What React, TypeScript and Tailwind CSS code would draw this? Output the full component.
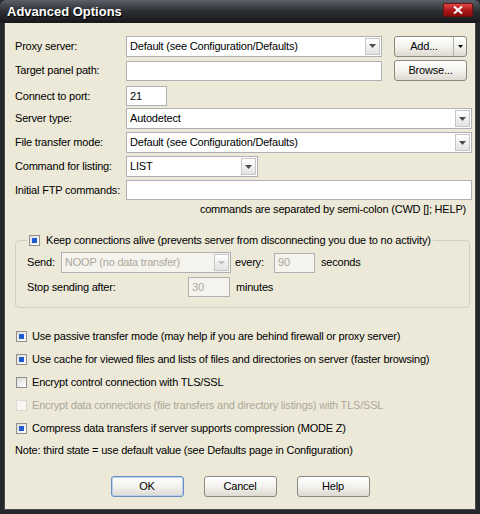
import React from "react"

const font = "font-['Liberation_Sans',Arial,sans-serif]"

function Arrow({ disabled }: { disabled?: boolean }) {
  return (
    <svg width="7" height="4" viewBox="0 0 7 4">
      <path d="M0 0h7L3.5 4z" fill={disabled ? "#c0c0c0" : "#4d4d4d"} />
    </svg>
  )
}

function Select({ value, w, disabled }: { value: string; w: string; disabled?: boolean }) {
  return (
    <div className={`${w} h-[21px] border border-[#b0afb3] ${disabled ? "bg-[#f4f3ee]" : "bg-white"} flex items-center`}>
      <span className={`flex-1 pl-[3px] truncate ${disabled ? "text-[#aca899]" : "text-black"}`}>{value}</span>
      <div className="w-[15px] h-[17px] mr-[1px] border border-[#c5c5c5] bg-gradient-to-b from-white to-[#e3e3e3] flex items-center justify-center">
        <Arrow disabled={disabled} />
      </div>
    </div>
  )
}

function Input({ value, w, disabled }: { value?: string; w: string; disabled?: boolean }) {
  return (
    <div className={`${w} h-[20px] border border-[#b0afb3] ${disabled ? "bg-[#f4f3ee] text-[#aca899]" : "bg-white text-black"} flex items-center pl-[3px]`}>
      {value}
    </div>
  )
}

function Btn({ label, w, isDefault }: { label: string; w: string; isDefault?: boolean }) {
  return (
    <div
      className={`${w} h-[21px] rounded-[3px] border ${isDefault ? "border-[#6a8fc2] shadow-[inset_0_0_0_1px_#b9d1ef]" : "border-[#8a8a80]"} bg-gradient-to-b from-white via-[#f3f2ee] to-[#dcdad0] flex items-center justify-center text-black`}
    >
      {label}
    </div>
  )
}

function Check({ state, disabled }: { state: "third" | "off"; disabled?: boolean }) {
  return (
    <div
      className={`w-[11px] h-[11px] border ${disabled ? "border-[#dcdad0] bg-[#f7f6f2]" : "border-[#8f8f8f] bg-gradient-to-br from-[#dcdcd8] to-white"} flex items-center justify-center shrink-0`}
    >
      {state === "third" && <div className="w-[5px] h-[5px] bg-[#2159d0]" />}
    </div>
  )
}

function Row({ label, children, cls }: { label: string; children: React.ReactNode; cls: string }) {
  return (
    <div className={`flex items-center ${cls}`}>
      <span className="w-[111px] shrink-0">{label}</span>
      {children}
    </div>
  )
}

const checks: { label: string; state: "third" | "off"; disabled?: boolean }[] = [
  { label: "Use passive transfer mode (may help if you are behind firewall or proxy server)", state: "third" },
  { label: "Use cache for viewed files and lists of files and directories on server (faster browsing)", state: "third" },
  { label: "Encrypt control connection with TLS/SSL", state: "off" },
  { label: "Encrypt data connections (file transfers and directory listings) with TLS/SSL", state: "off", disabled: true },
  { label: "Compress data transfers if server supports compression (MODE Z)", state: "third" },
]

export default function App() {
  return (
    <div className={`w-[480px] h-[514px] flex flex-col bg-[#26272b] ${font} text-[11px] leading-[13px] tracking-[-0.2px] text-black`}>
      {/* title bar */}
      <div className="h-[23px] shrink-0 flex items-center justify-between pl-[7px] pr-[7px] bg-gradient-to-b from-[#5c6069] via-[#2c2e33] to-[#17181b] rounded-t-[6px]">
        <span className="text-white font-bold text-[13px] leading-[16px] tracking-normal [text-shadow:1px_1px_0_#000]">Advanced Options</span>
        <div className="w-[30px] h-[14px] mt-[-4px] rounded-[2px] border border-[#6e1010] bg-gradient-to-b from-[#e04a4a] via-[#b01818] to-[#8c0c0c] flex items-center justify-center">
          <svg width="10" height="8" viewBox="0 0 10 8">
            <path d="M1 0.5L9 7.5M9 0.5L1 7.5" stroke="white" strokeWidth="2" />
          </svg>
        </div>
      </div>

      {/* body */}
      <div className="flex-1 mx-[4px] mb-[4px] bg-[#ece9d8] border-l border-r border-b border-[#4a4a4a] pl-[10px] flex flex-col">
        <Row label="Proxy server:" cls="mt-[12px] h-[22px]">
          <Select value="Default (see Configuration/Defaults)" w="w-[256px]" />
          <div className="ml-[12px] w-[73px] h-[21px] rounded-[3px] border border-[#8a8a80] bg-gradient-to-b from-white via-[#f3f2ee] to-[#dcdad0] flex">
            <div className="flex-1 flex items-center justify-center border-r border-[#b5b3a8]">Add...</div>
            <div className="w-[12px] flex items-center justify-center">
              <svg width="5" height="3" viewBox="0 0 5 3">
                <path d="M0 0h5L2.5 3z" fill="#000" />
              </svg>
            </div>
          </div>
        </Row>
        <Row label="Target panel path:" cls="mt-[3px] h-[21px]">
          <Input w="w-[256px]" />
          <div className="ml-[12px]">
            <Btn label="Browse..." w="w-[73px]" />
          </div>
        </Row>
        <Row label="Connect to port:" cls="mt-[5px] h-[20px]">
          <Input value="21" w="w-[41px]" />
        </Row>
        <Row label="Server type:" cls="mt-[2px] h-[21px]">
          <Select value="Autodetect" w="w-[346px]" />
        </Row>
        <Row label="File transfer mode:" cls="mt-[3px] h-[21px]">
          <Select value="Default (see Configuration/Defaults)" w="w-[346px]" />
        </Row>
        <Row label="Command for listing:" cls="mt-[3px] h-[21px]">
          <Select value="LIST" w="w-[132px]" />
        </Row>
        <Row label="Initial FTP commands:" cls="mt-[3px] h-[20px]">
          <Input w="w-[346px]" />
        </Row>
        <div className="mt-[3px] w-[451px] text-right">commands are separated by semi-colon (CWD []; HELP)</div>

        {/* keep alive group */}
        <fieldset className="mt-[18px] w-[455px] h-[74px] border border-[#d0d0bf] rounded-[4px] pl-[11px]">
          <legend className="px-[2px] flex items-center gap-[6px]">
            <Check state="third" />
            <span>Keep connections alive (prevents server from disconnecting you due to no activity)</span>
          </legend>
          <div className="flex items-center mt-[5px] h-[21px]">
            <span className="w-[34px]">Send:</span>
            <Select value="NOOP (no data transfer)" w="w-[170px]" disabled />
            <span className="ml-[4px] w-[39px]">every:</span>
            <Input value="90" w="w-[41px]" disabled />
            <span className="ml-[6px]">seconds</span>
          </div>
          <div className="flex items-center mt-[4px] h-[20px]">
            <span className="w-[161px]">Stop sending after:</span>
            <Input value="30" w="w-[42px]" disabled />
            <span className="ml-[6px]">minutes</span>
          </div>
        </fieldset>

        <div className="mt-[22px] flex flex-col gap-[10px]">
          {checks.map((c) => (
            <div key={c.label} className="flex items-center gap-[5px] h-[13px] pl-[1px]">
              <Check state={c.state} disabled={c.disabled} />
              <span className={c.disabled ? "text-[#aca899]" : ""}>{c.label}</span>
            </div>
          ))}
          <div className="h-[13px] -mt-[1px]">Note: third state = use default value (see Defaults page in Configuration)</div>
        </div>

        <div className="mt-[19px] flex justify-center gap-[20px] pr-[10px]">
          <Btn label="OK" w="w-[73px]" isDefault />
          <Btn label="Cancel" w="w-[73px]" />
          <Btn label="Help" w="w-[73px]" />
        </div>
      </div>
    </div>
  )
}
